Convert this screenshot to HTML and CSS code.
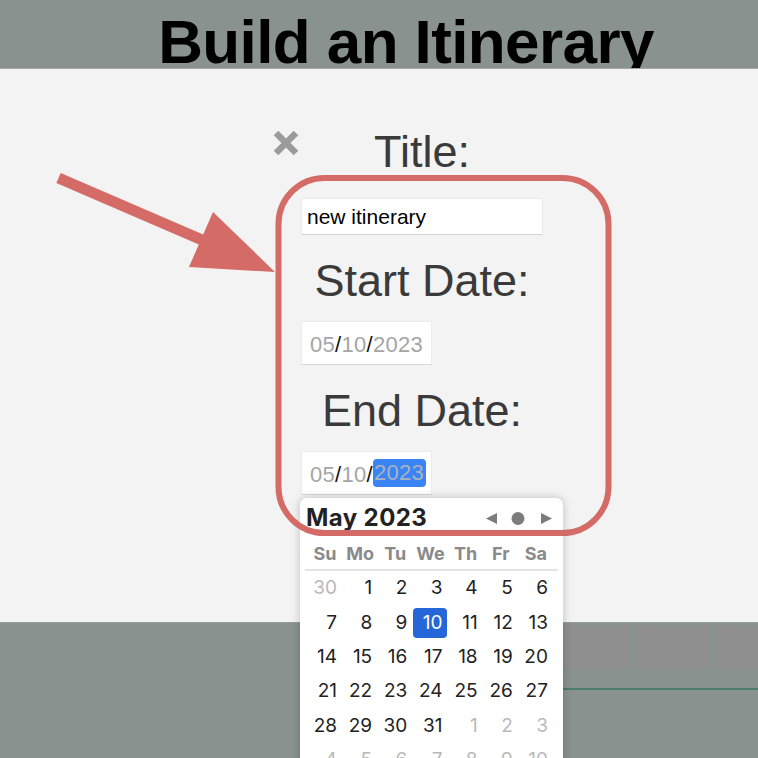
FILE: index.html
```html
<!DOCTYPE html>
<html lang="en">
<head>
<meta charset="utf-8">
<title>Build an Itinerary</title>
<link rel="stylesheet" href="styles.css">
</head>
<body>
<header class="topbar"><h1 class="topbar__title">Build an Itinerary</h1></header>
<main class="panel">
  <button class="close" type="button" aria-label="Close">
    <svg width="28" height="28" viewBox="0 0 28 28"><path d="M4 4L24 24M24 4L4 24" stroke="#9b9b9b" stroke-width="6.5"/></svg>
  </button>
  <form class="form">
    <label class="form__label">Title:</label>
    <input class="text-field" type="text" value="new itinerary">
    <label class="form__label form__label--date">Start Date:</label>
    <div class="date-field"><span class="seg">05</span><span class="sep">/</span><span class="seg">10</span><span class="sep">/</span><span class="seg">2023</span></div>
    <label class="form__label form__label--date">End Date:</label>
    <div class="date-field"><span class="seg">05</span><span class="sep">/</span><span class="seg">10</span><span class="sep">/</span><span class="seg seg--sel">2023</span></div>
  </form>
</main>
<footer class="bottom">
  <div class="tabs"><div class="tab"></div><div class="tab"></div><div class="tab"></div><div class="tab"></div></div>
  <div class="rule"></div>
</footer>
<div class="calendar">
  <div class="cal__head">
    <span class="cal__month">May 2023</span>
    <svg class="cal__nav" width="67" height="15" viewBox="0 0 67 15"><path d="M1 7.5L12 2V13Z" fill="#7c7c7c"/><circle cx="33" cy="7.5" r="6.5" fill="#7c7c7c"/><path d="M56 2L67 7.5L56 13Z" fill="#7c7c7c"/></svg>
  </div>
  <div class="cal__dow"><span>Su</span><span>Mo</span><span>Tu</span><span>We</span><span>Th</span><span>Fr</span><span>Sa</span></div>
  <div class="cal__days">
    <span class="day day--out">30</span><span class="day">1</span><span class="day">2</span><span class="day">3</span><span class="day">4</span><span class="day">5</span><span class="day">6</span>
    <span class="day">7</span><span class="day">8</span><span class="day">9</span><span class="day day--sel">10</span><span class="day">11</span><span class="day">12</span><span class="day">13</span>
    <span class="day">14</span><span class="day">15</span><span class="day">16</span><span class="day">17</span><span class="day">18</span><span class="day">19</span><span class="day">20</span>
    <span class="day">21</span><span class="day">22</span><span class="day">23</span><span class="day">24</span><span class="day">25</span><span class="day">26</span><span class="day">27</span>
    <span class="day">28</span><span class="day">29</span><span class="day">30</span><span class="day">31</span><span class="day day--out">1</span><span class="day day--out">2</span><span class="day day--out">3</span>
    <span class="day day--out">4</span><span class="day day--out">5</span><span class="day day--out">6</span><span class="day day--out">7</span><span class="day day--out">8</span><span class="day day--out">9</span><span class="day day--out">10</span>
  </div>
</div>
<svg class="annot" width="758" height="758" viewBox="0 0 758 758">
  <rect x="278.5" y="178" width="330" height="355" rx="46" ry="46" fill="none" stroke="#d46b67" stroke-width="6"/>
  <polygon points="60.7,173 203.2,234.5 213,212 275,272 189,267 198.8,244.5 56.3,183" fill="#d46b67"/>
</svg>
</body>
</html>
```
FILE: styles.css
```css
html, body {
  margin: 0;
  padding: 0;
  width: 758px;
  height: 758px;
  overflow: hidden;
  background: #89928e;
  font-family: "Liberation Sans", Arial, sans-serif;
}
body { position: relative; }

.topbar {
  height: 69px;
  box-sizing: border-box;
  padding: 10.5px 0 0 54px;
  overflow: hidden;
  background: #89928e;
  border-bottom: 1px solid #a4a7a6;
  text-align: center;
}
.topbar__title {
  margin: 0;
  font-size: 62px;
  line-height: 62px;
  font-weight: 700;
  letter-spacing: -0.6px;
  color: #000;
  white-space: nowrap;
}

.panel {
  height: 554px;
  box-sizing: border-box;
  background: #f3f3f3;
  border-bottom: 1px solid #9c9c9c;
  display: flex;
  align-items: flex-start;
  padding: 57px 0 0 272px;
}

.close {
  width: 28px;
  height: 28px;
  padding: 0;
  margin: 3px 1px 0 0;
  border: 0;
  background: none;
  display: block;
}
.close svg { display: block; }

.form {
  width: 242px;
  display: flex;
  flex-direction: column;
  align-items: flex-start;
}
.form__label {
  align-self: stretch;
  text-align: center;
  font-size: 45px;
  line-height: 52px;
  color: #3a3a3a;
  margin-bottom: 20px;
}
.form__label--date {
  margin-top: 20px;
  margin-bottom: 14px;
}

.text-field {
  width: 242px;
  height: 37px;
  box-sizing: border-box;
  margin: 0;
  padding: 0 5px;
  border: 1px solid #e9e9e9;
  border-bottom-color: #d2d2d2;
  border-radius: 0;
  background: #fff;
  font-family: "Liberation Sans", Arial, sans-serif;
  font-size: 21px;
  color: #000;
  outline: none;
}

.date-field {
  width: 131px;
  height: 44px;
  box-sizing: border-box;
  padding: 4px 0 0 8px;
  background: #fff;
  border: 1px solid #ececec;
  border-bottom-color: #d8d8d8;
  display: flex;
  align-items: center;
  font-size: 22px;
  letter-spacing: 0.3px;
  white-space: nowrap;
}
.seg { color: #a5a5a5; }
.sep { color: #111; }
.seg--sel {
  display: inline-block;
  background: #3a84f6;
  color: #a9b2bf;
  border-radius: 4px;
  line-height: 28px;
  padding: 0 2px 0 1px;
  margin: -4px 0 0 0;
}

.bottom {
  height: 135px;
  box-sizing: border-box;
  padding: 2px 0 0 478px;
  overflow: hidden;
}
.tabs {
  display: flex;
  gap: 9.5px;
}
.tab {
  flex: 0 0 70px;
  height: 44px;
  background: #8f8f8f;
}
.rule {
  margin-top: 19px;
  height: 2px;
  background: #4b7b6a;
}

.calendar {
  position: absolute;
  left: 300px;
  top: 498px;
  width: 263px;
  height: 300px;
  background: #fff;
  border-radius: 7px;
  box-shadow: 0 0 10px rgba(0, 0, 0, 0.22);
  font-family: Inter, "Liberation Sans", sans-serif;
  z-index: 5;
}
.cal__head {
  height: 40px;
  box-sizing: border-box;
  padding: 2px 11px 0 6px;
  display: flex;
  justify-content: space-between;
  align-items: flex-start;
}
.cal__month {
  font-size: 24px;
  line-height: 36px;
  font-weight: 700;
  color: #222;
  letter-spacing: 0.4px;
}
.cal__nav { display: block; margin-top: 11px; }

.cal__dow,
.cal__days {
  display: grid;
  grid-template-columns: repeat(7, 34px);
  column-gap: 1.17px;
}
.cal__dow {
  margin: 0 5px;
  padding-left: 3px;
  height: 31px;
  border-bottom: 2px solid #e4e4e4;
  font-size: 18px;
  line-height: 31px;
  font-weight: 700;
  color: #8a8a8a;
  text-align: center;
}
.cal__days {
  padding: 2.2px 0 0 8px;
  grid-auto-rows: 30px;
  row-gap: 4.4px;
}
.day {
  text-align: right;
  padding-right: 5px;
  font-size: 19px;
  line-height: 30px;
  color: #222;
  border-radius: 4px;
}
.day--out { color: #b9b9b9; }
.day--sel { background: #2566d9; color: #fff; }

.annot {
  position: absolute;
  left: 0;
  top: 0;
  z-index: 10;
  pointer-events: none;
}
```
